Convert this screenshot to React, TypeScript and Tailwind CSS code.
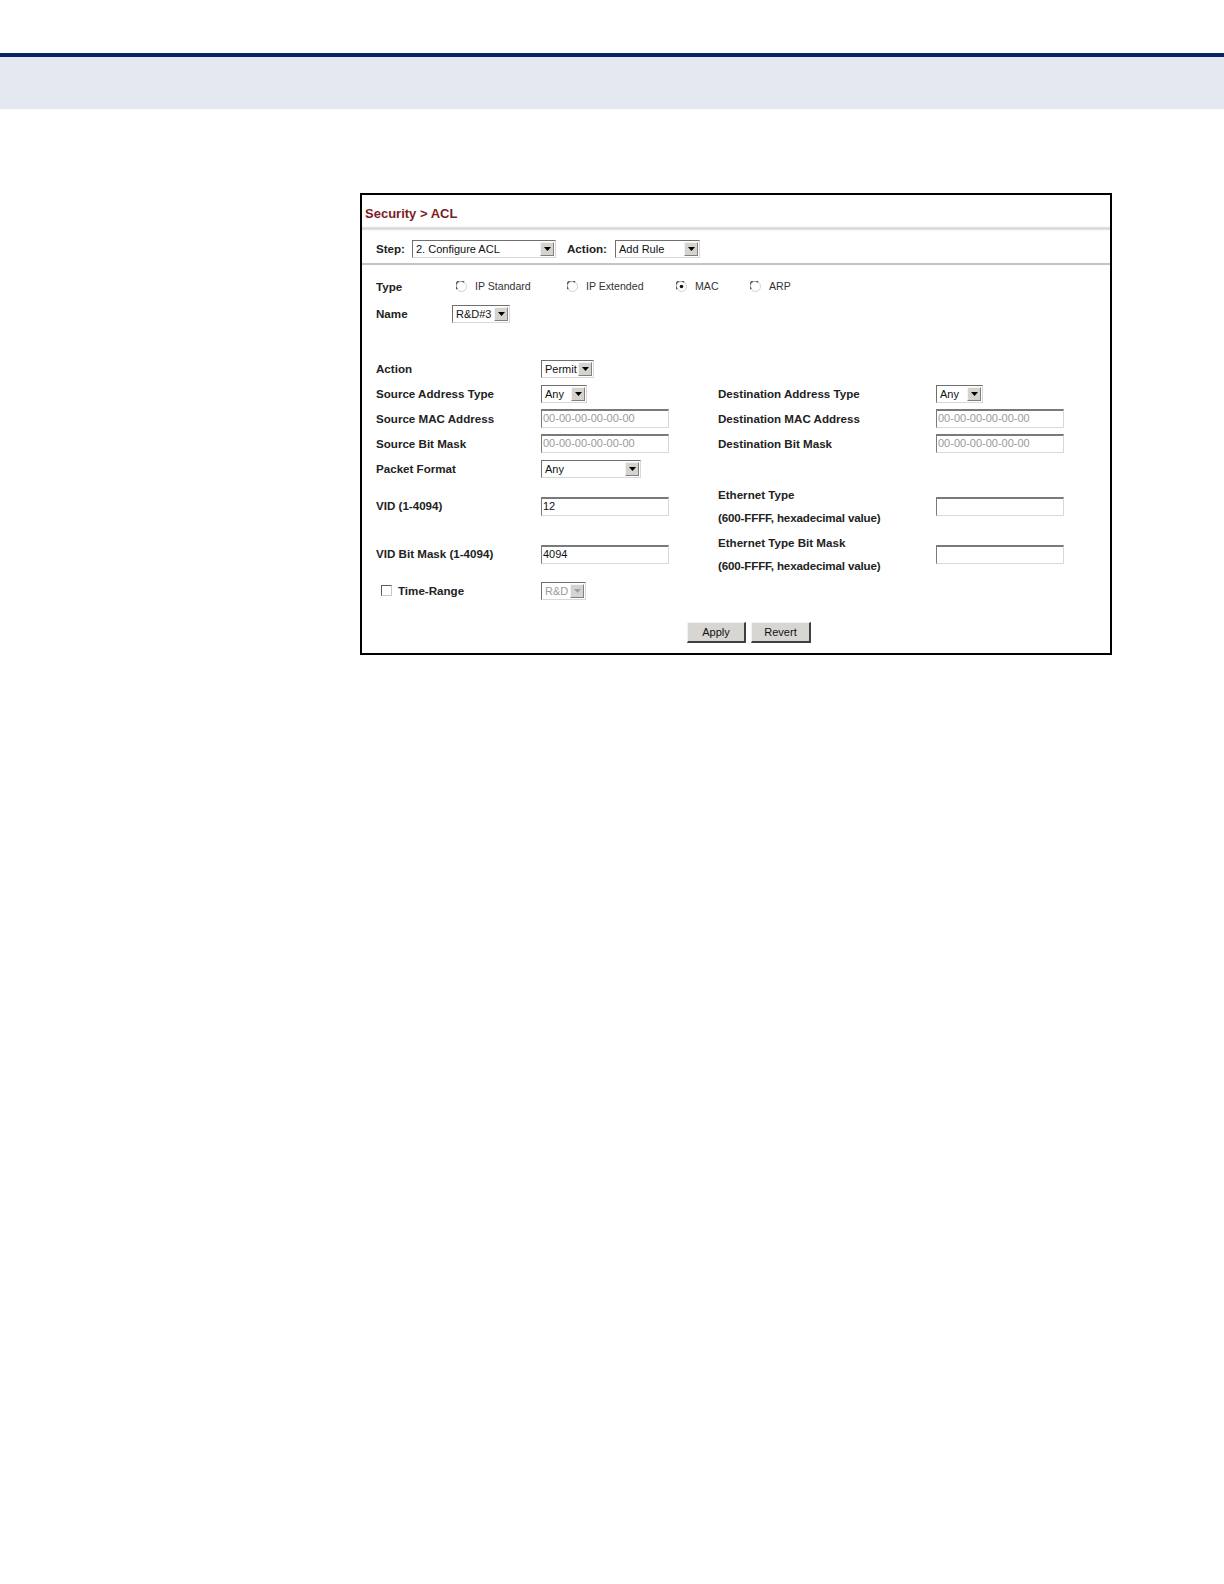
import React from 'react'

const Arrow = ({ disabled }: { disabled?: boolean }) => (
  <div className="my-[1px] mr-[1px] flex w-[14px] shrink-0 items-center justify-center border border-t-[#f4f4f4] border-l-[#f4f4f4] border-b-[#808080] border-r-[#808080] bg-[#d6d3ce]">
    <svg width="7" height="4" viewBox="0 0 7 4">
      <path d="M0 0h7L3.5 4z" fill={disabled ? '#a0a0a0' : '#000'} />
    </svg>
  </div>
)

function Select({ text, className, disabled }: { text: string; className: string; disabled?: boolean }) {
  return (
    <div
      className={`flex h-[18px] shrink-0 items-stretch border border-t-[#6f6f6f] border-l-[#6f6f6f] border-b-[#d8d8d8] border-r-[#d8d8d8] bg-white ${className}`}
    >
      <span
        className={`flex-1 overflow-hidden whitespace-nowrap pl-[3px] text-[11px] leading-[16px] ${disabled ? 'text-[#9a9a9a]' : 'text-[#111]'}`}
      >
        {text}
      </span>
      <Arrow disabled={disabled} />
    </div>
  )
}

function Input({ value, placeholder }: { value?: string; placeholder?: string }) {
  return (
    <div className="h-[19px] w-[128px] shrink-0 border border-t-2 border-t-[#7a7a7a] border-l-[#7a7a7a] border-b-[#d8d8d8] border-r-[#d8d8d8] bg-white pl-[1px] text-[11px] leading-[15px]">
      {value ? <span className="text-[#111]">{value}</span> : <span className="text-[#9a9a9a]">{placeholder}</span>}
    </div>
  )
}

function Radio({ checked, label, className }: { checked?: boolean; label: string; className: string }) {
  return (
    <div className={`flex items-center gap-[8px] ${className}`}>
      <svg width="11" height="11" viewBox="0 0 11 11">
        <circle cx="5.5" cy="5.5" r="5" fill="#fff" stroke="#cfcfcf" />
        <path d="M1.2 8 A4.6 4.6 0 0 1 8 1.2" fill="none" stroke="#555" strokeWidth="1.4" />
        {checked && <circle cx="5.5" cy="5.5" r="1.8" fill="#111" />}
      </svg>
      <span className="text-[10.6px] text-[#333]">{label}</span>
    </div>
  )
}

const Label = ({ children, className = '' }: { children: React.ReactNode; className?: string }) => (
  <div className={`shrink-0 text-[11.6px] font-bold text-[#222] ${className}`}>{children}</div>
)

export default function App() {
  return (
    <div className="min-h-[1584px] bg-white font-['Liberation_Sans',Arial,sans-serif]">
      {/* top banner */}
      <div className="pt-[53px]">
        <div className="h-[4px] bg-[#0b2463]" />
        <div className="h-[52px] bg-[#e4e8f0]" />
      </div>

      {/* ACL panel */}
      <div className="ml-[360px] mt-[84px] flex h-[462px] w-[752px] flex-col border-2 border-black">
        <div className="h-[31px] pl-[3px] pt-[11px] text-[13px] font-bold leading-[16px] text-[#7b1d24]">
          Security &gt; ACL
        </div>
        <div className="h-[5px] bg-[linear-gradient(#ffffff,#d4d4d4,#ffffff)]" />

        {/* step row */}
        <div className="flex h-[34px] items-center border-b-2 border-[#c4c4c4] pl-[14px] pt-[3px]">
          <Label className="w-[36px]">Step:</Label>
          <Select text="2. Configure ACL" className="w-[144px]" />
          <Label className="ml-[11px] w-[48px]">Action:</Label>
          <Select text="Add Rule" className="w-[85px]" />
        </div>

        <div className="flex flex-col pl-[14px]">
          <div className="mt-[10px] flex h-[24px] items-center">
            <Label className="w-[80px]">Type</Label>
            <Radio label="IP Standard" className="w-[111px]" />
            <Radio label="IP Extended" className="w-[109px]" />
            <Radio label="MAC" checked className="w-[74px]" />
            <Radio label="ARP" className="w-[60px]" />
          </div>
          <div className="mt-[3px] flex h-[24px] items-center">
            <Label className="w-[76px]">Name</Label>
            <Select text="R&D#3" className="w-[58px]" />
          </div>

          <div className="mt-[30px] flex h-[25px] items-center">
            <Label className="w-[165px]">Action</Label>
            <Select text="Permit" className="w-[53px]" />
          </div>
          <div className="flex h-[25px] items-center">
            <Label className="w-[165px]">Source Address Type</Label>
            <div className="w-[177px]">
              <Select text="Any" className="w-[46px]" />
            </div>
            <Label className="w-[218px]">Destination Address Type</Label>
            <Select text="Any" className="w-[47px]" />
          </div>
          <div className="flex h-[25px] items-center">
            <Label className="w-[165px]">Source MAC Address</Label>
            <div className="w-[177px]">
              <Input placeholder="00-00-00-00-00-00" />
            </div>
            <Label className="w-[218px]">Destination MAC Address</Label>
            <Input placeholder="00-00-00-00-00-00" />
          </div>
          <div className="flex h-[25px] items-center">
            <Label className="w-[165px]">Source Bit Mask</Label>
            <div className="w-[177px]">
              <Input placeholder="00-00-00-00-00-00" />
            </div>
            <Label className="w-[218px]">Destination Bit Mask</Label>
            <Input placeholder="00-00-00-00-00-00" />
          </div>
          <div className="flex h-[25px] items-center">
            <Label className="w-[165px]">Packet Format</Label>
            <Select text="Any" className="w-[100px]" />
          </div>

          <div className="mt-[2px] flex h-[46px] items-center">
            <Label className="w-[165px]">VID (1-4094)</Label>
            <div className="w-[177px]">
              <Input value="12" />
            </div>
            <Label className="w-[218px] leading-[23px]">
              Ethernet Type
              <br />
              <span className="tracking-[-0.15px]">(600-FFFF, hexadecimal value)</span>
            </Label>
            <Input />
          </div>
          <div className="mt-[2px] flex h-[46px] items-center">
            <Label className="w-[165px]">VID Bit Mask (1-4094)</Label>
            <div className="w-[177px]">
              <Input value="4094" />
            </div>
            <Label className="w-[218px] leading-[23px]">
              Ethernet Type Bit Mask
              <br />
              <span className="tracking-[-0.15px]">(600-FFFF, hexadecimal value)</span>
            </Label>
            <Input />
          </div>

          <div className="mt-[2px] flex h-[24px] items-center">
            <div className="flex w-[165px] items-center pl-[5px]">
              <div className="h-[11px] w-[11px] border border-t-[#5a5a5a] border-l-[#5a5a5a] border-b-[#c8c8c8] border-r-[#c8c8c8] bg-white" />
              <Label className="ml-[6px]">Time-Range</Label>
            </div>
            <Select text="R&D" disabled className="w-[45px]" />
          </div>
        </div>

        <div className="ml-[325px] mt-[19px] flex gap-[5px]">
          <button className="h-[21px] w-[59px] border border-t-[#f2f2f2] border-l-[#f2f2f2] border-b-2 border-r-2 border-b-[#404040] border-r-[#404040] bg-[#d8d6d2] text-[11px] text-[#111]">
            Apply
          </button>
          <button className="h-[21px] w-[60px] border border-t-[#f2f2f2] border-l-[#f2f2f2] border-b-2 border-r-2 border-b-[#404040] border-r-[#404040] bg-[#d8d6d2] text-[11px] text-[#111]">
            Revert
          </button>
        </div>
      </div>
    </div>
  )
}
